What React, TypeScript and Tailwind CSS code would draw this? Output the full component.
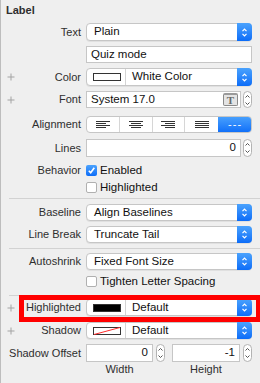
import React from 'react'

const font = { fontFamily: '"Liberation Sans", Arial, sans-serif' }

function Plus() {
  return (
    <svg width="8" height="8" viewBox="0 0 8 8" className="shrink-0">
      <path d="M4 0.5V7.5M0.5 4H7.5" stroke="#a3a3a3" strokeWidth="1" />
    </svg>
  )
}

function UpDown({ color = 'white' }: { color?: string }) {
  return (
    <svg width="7" height="11" viewBox="0 0 7 11">
      <path d="M1.5 4.2L3.5 2.2L5.5 4.2M1.5 6.8L3.5 8.8L5.5 6.8" stroke={color} strokeWidth="1.2" fill="none" />
    </svg>
  )
}

function Row({
  label,
  plus,
  className = '',
  children,
}: {
  label?: string
  plus?: boolean
  className?: string
  children?: React.ReactNode
}) {
  return (
    <div className={`flex items-stretch pr-[8px] ${className}`}>
      <div className="flex w-[80px] shrink-0 items-center pl-[6px]">
        {plus && <Plus />}
        <span className="ml-auto text-[11px] text-[#2e2e2e]">{label}</span>
      </div>
      <div className="ml-[5px] flex flex-1 items-stretch">{children}</div>
    </div>
  )
}

function Popup({ children }: { children: React.ReactNode }) {
  return (
    <div className="flex flex-1 items-stretch rounded-[4px] border border-[#c6c6c6] bg-white shadow-[0_1px_0_rgba(0,0,0,0.06)]">
      <div className="flex flex-1 items-stretch text-[11.5px] text-[#111]">{children}</div>
      <div className="-my-px -mr-px flex w-[15px] items-center justify-center rounded-r-[4px] bg-gradient-to-b from-[#4aa2fd] to-[#0a6cf8]">
        <UpDown />
      </div>
    </div>
  )
}

function Swatch({ kind }: { kind: 'white' | 'black' | 'none' }) {
  return (
    <div className="flex w-[39px] items-center border-r border-[#d4d4d4] pl-[6px]">
      {kind === 'none' ? (
        <svg width="28" height="8" viewBox="0 0 28 8">
          <rect x="0.5" y="0.5" width="27" height="7" fill="white" stroke="#333" />
          <path d="M1 7.5L27 0.5" stroke="#ff2a2a" strokeWidth="1" />
        </svg>
      ) : (
        <div
          className={`h-[8px] w-[28px] border border-[#333] ${kind === 'black' ? 'bg-black' : 'bg-white'}`}
        />
      )}
    </div>
  )
}

function Stepper() {
  return (
    <div className="ml-[2px] flex w-[9px] shrink-0 items-center justify-center rounded-full border border-[#b3b3b3] bg-white">
      <svg width="7" height="14" viewBox="0 0 7 14">
        <path d="M1.5 4.5L3.5 2.5L5.5 4.5M1.5 9.5L3.5 11.5L5.5 9.5" stroke="#555" strokeWidth="1" fill="none" />
      </svg>
    </div>
  )
}

function Field({ children, className = '' }: { children?: React.ReactNode; className?: string }) {
  return (
    <div
      className={`flex items-center border border-[#c6c6c6] bg-white px-[4px] text-[11.5px] text-[#111] ${className}`}
    >
      {children}
    </div>
  )
}

function Check({ checked, label }: { checked?: boolean; label: string }) {
  return (
    <div className="flex items-center">
      {checked ? (
        <div className="flex h-[11px] w-[11px] items-center justify-center rounded-[2px] bg-gradient-to-b from-[#4aa2fd] to-[#0a6cf8]">
          <svg width="9" height="9" viewBox="0 0 9 9">
            <path d="M1.8 4.8L3.7 6.8L7.3 1.8" stroke="white" strokeWidth="1.6" fill="none" />
          </svg>
        </div>
      ) : (
        <div className="h-[11px] w-[11px] rounded-[2px] border border-[#b0b0b0] bg-white" />
      )}
      <span className="ml-[3px] text-[11.5px] text-[#111]">{label}</span>
    </div>
  )
}

function AlignIcon({ mode }: { mode: 'left' | 'center' | 'right' | 'justify' }) {
  const short = (y: number) => {
    if (mode === 'left') return `M0 ${y}H10`
    if (mode === 'center') return `M2 ${y}H12`
    if (mode === 'right') return `M4 ${y}H14`
    return `M0 ${y}H14`
  }
  return (
    <svg width="14" height="8" viewBox="0 0 14 8">
      <path d={`M0 0.5H14${short(2.5)}M0 4.5H14${short(6.5)}`} stroke="#333" strokeWidth="1" />
    </svg>
  )
}

function Separator({ className = '' }: { className?: string }) {
  return <div className={`ml-[8px] h-px bg-[#d2d2d2] ${className}`} />
}

export default function App() {
  return (
    <div
      style={font}
      className="relative flex h-[383px] w-[260px] flex-col overflow-hidden border-l border-[#bdbdbd] bg-[#efefef]"
    >
      <div className="flex h-[21px] items-center pl-[5px] text-[11px] font-bold text-[#2e2e2e]">Label</div>

      <Row label="Text" className="mt-[2px] h-[18px]">
        <Popup>
          <span className="flex items-center pl-[7px]">Plain</span>
        </Popup>
      </Row>

      <Row className="mt-[5px] h-[17px]">
        <Field className="flex-1">Quiz mode</Field>
      </Row>

      <Row label="Color" plus className="mt-[5px] h-[18px]">
        <Popup>
          <Swatch kind="white" />
          <span className="flex items-center pl-[6px]">White Color</span>
        </Popup>
      </Row>

      <Row label="Font" plus className="mt-[5px] h-[17px]">
        <Field className="flex-1 justify-between pr-[2px]">
          <span>System 17.0</span>
          <div className="flex h-[13px] w-[15px] items-center justify-center rounded-[2px] border border-[#8a8a8a] border-t-2 border-t-[#9a9a9a] bg-[#e4e4e4]">
            <span
              className="text-[11px] font-bold leading-none text-[#6a6a6a]"
              style={{ fontFamily: '"Liberation Serif", serif' }}
            >
              T
            </span>
          </div>
        </Field>
        <Stepper />
      </Row>

      <Row label="Alignment" className="mt-[8px] h-[17px]">
        <div className="grid flex-1 grid-cols-5 overflow-hidden rounded-[4px] border border-[#c6c6c6] bg-white">
          <div className="flex items-center justify-center border-r border-[#d6d6d6]">
            <AlignIcon mode="left" />
          </div>
          <div className="flex items-center justify-center border-r border-[#d6d6d6]">
            <AlignIcon mode="center" />
          </div>
          <div className="flex items-center justify-center border-r border-[#d6d6d6]">
            <AlignIcon mode="right" />
          </div>
          <div className="flex items-center justify-center">
            <AlignIcon mode="justify" />
          </div>
          <div className="-my-px -mr-px flex items-center justify-center bg-gradient-to-b from-[#4aa2fd] to-[#0a6cf8] text-[11px] leading-none tracking-[1px] text-white">
            ---
          </div>
        </div>
      </Row>

      <Row label="Lines" className="mt-[6px] h-[18px]">
        <Field className="flex-1 justify-end">0</Field>
        <Stepper />
      </Row>

      <Row label="Behavior" className="mt-[5px] h-[17px]">
        <Check checked label="Enabled" />
      </Row>
      <Row className="h-[17px]">
        <Check label="Highlighted" />
      </Row>

      <Separator className="mt-[2px]" />

      <Row label="Baseline" className="mt-[5px] h-[17px]">
        <Popup>
          <span className="flex items-center pl-[7px]">Align Baselines</span>
        </Popup>
      </Row>

      <Row label="Line Break" className="mt-[5px] h-[17px]">
        <Popup>
          <span className="flex items-center pl-[7px]">Truncate Tail</span>
        </Popup>
      </Row>

      <Separator className="mt-[5px]" />

      <Row label="Autoshrink" className="mt-[4px] h-[17px]">
        <Popup>
          <span className="flex items-center pl-[7px]">Fixed Font Size</span>
        </Popup>
      </Row>

      <Row className="mt-[3px] h-[17px]">
        <Check label="Tighten Letter Spacing" />
      </Row>

      <Separator className="mt-[5px]" />

      <Row label="Highlighted" plus className="mt-[3px] h-[17px]">
        <Popup>
          <Swatch kind="black" />
          <span className="flex items-center pl-[6px]">Default</span>
        </Popup>
      </Row>

      <Row label="Shadow" plus className="mt-[6px] h-[17px]">
        <Popup>
          <Swatch kind="none" />
          <span className="flex items-center pl-[6px]">Default</span>
        </Popup>
      </Row>

      <Row label="Shadow Offset" className="mt-[5px] h-[18px]">
        <Field className="w-[67px] justify-end">0</Field>
        <div className="ml-[1px] flex">
          <Stepper />
        </div>
        <Field className="ml-[7px] w-[68px] justify-end">-1</Field>
        <div className="ml-[1px] flex">
          <Stepper />
        </div>
      </Row>

      <Row className="h-[14px]">
        <div className="flex w-[67px] items-center justify-center text-[11px] text-[#2e2e2e]">Width</div>
        <div className="w-[19px]" />
        <div className="flex w-[68px] items-center justify-center text-[11px] text-[#2e2e2e]">Height</div>
      </Row>

      {/* red annotation box */}
      <div className="pointer-events-none absolute left-[18px] top-[295px] h-[27px] w-[242px] border-[5px] border-[#ff0000]" />
    </div>
  )
}
